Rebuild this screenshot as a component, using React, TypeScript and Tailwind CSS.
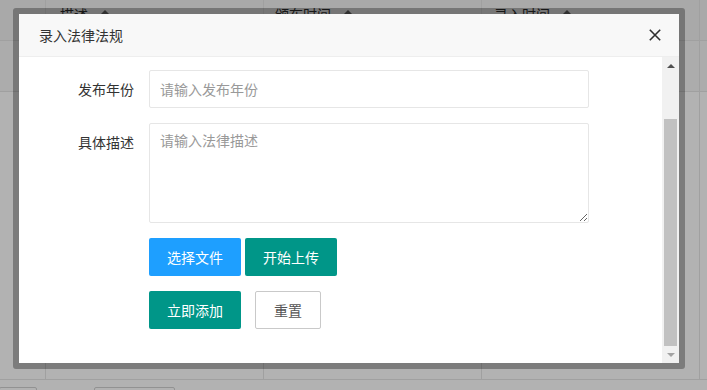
import React from "react";

function HeadCell({ w, pl, label, last }: { w: string; pl: string; label?: string; last?: boolean }) {
  return (
    <div className={`${w} ${last ? "" : "border-r"} border-[#e6e6e6] ${pl} pt-[4px] flex items-start`}>
      {label ? (
        <>
          <span className="text-[14px] leading-[20px] text-[#333]">{label}</span>
          <span className="ml-[12px] mt-[6px] w-0 h-0 border-l-[5px] border-r-[5px] border-b-[5px] border-l-transparent border-r-transparent border-b-[#666]" />
        </>
      ) : null}
    </div>
  );
}

function Row({ h, bg, children }: { h: string; bg: string; children?: React.ReactNode }) {
  return <div className={`flex ${h} ${bg} border-b border-[#e6e6e6]`}>{children}</div>;
}

function EmptyCells() {
  return (
    <>
      <div className="w-[46px] border-r border-[#e6e6e6]" />
      <div className="w-[218px] border-r border-[#e6e6e6]" />
      <div className="w-[218px] border-r border-[#e6e6e6]" />
      <div className="w-[218px] border-r border-[#e6e6e6]" />
      <div className="flex-1" />
    </>
  );
}

export default function App() {
  return (
    <div className="relative w-[707px] h-[390px] overflow-hidden bg-white font-['Noto_Sans_CJK_SC','Noto_Sans',sans-serif] text-[#333]">
      {/* page behind */}
      <div className="flex flex-col">
        <Row h="h-[41px]" bg="bg-[#f2f2f2]">
          <div className="w-[46px] border-r border-[#e6e6e6]" />
          <HeadCell w="w-[218px]" pl="pl-[14px]" label="描述" />
          <HeadCell w="w-[218px]" pl="pl-[11px]" label="颁布时间" />
          <HeadCell w="w-[218px]" pl="pl-[12px]" label="录入时间" />
          <div className="flex-1" />
        </Row>
        <Row h="h-[51px]" bg="bg-[#f6f6f6]">
          <EmptyCells />
        </Row>
        <Row h="h-[288px]" bg="bg-white">
          <EmptyCells />
        </Row>
        <div className="flex mt-[7px]">
          <div className="w-[38px] h-[30px] border border-[#d2d2d2] rounded-[2px] -ml-[1px]" />
          <div className="w-[81px] h-[30px] border border-[#d2d2d2] rounded-[2px] ml-[57px]" />
        </div>
      </div>

      {/* shade */}
      <div className="absolute inset-0 bg-black/30" />

      {/* dialog */}
      <div className="absolute left-[13px] top-[8px] w-[672px] h-[361px] border-[6px] border-black/30 rounded-[3px] flex flex-col">
        <div className="flex-1 bg-white flex flex-col min-h-0">
          <div className="h-[43px] shrink-0 bg-[#f8f8f8] border-b border-[#eeeeee] flex items-center justify-between pl-[20px] pr-[18px]">
            <span className="text-[14px] leading-[20px] text-[#333]">录入法律法规</span>
            <svg width="12" height="12" viewBox="0 0 12 12" className="block">
              <path d="M0.8 0.8 L11.2 11.2 M11.2 0.8 L0.8 11.2" stroke="#2f2f2f" strokeWidth="1.6" fill="none" />
            </svg>
          </div>

          <div className="flex flex-1 min-h-0">
            <div className="flex-1 pl-[20px] pt-[13px]">
              <div className="flex">
                <label className="w-[110px] px-[15px] py-[9px] text-right text-[14px] leading-[20px] text-[#333]">发布年份</label>
                <input
                  placeholder="请输入发布年份"
                  className="w-[440px] h-[38px] border border-[#e6e6e6] rounded-[2px] px-[10px] text-[14px] leading-[20px] outline-none placeholder:text-[#999] bg-white"
                />
              </div>
              <div className="flex mt-[15px]">
                <label className="w-[110px] px-[15px] py-[9px] text-right text-[14px] leading-[20px] text-[#333]">具体描述</label>
                <textarea
                  placeholder="请输入法律描述"
                  className="w-[440px] h-[100px] border border-[#e6e6e6] rounded-[2px] px-[10px] py-[6px] text-[14px] leading-[20px] outline-none placeholder:text-[#999] bg-white block"
                />
              </div>
              <div className="flex mt-[15px] pl-[110px] gap-[4px]">
                <button className="h-[38px] px-[18px] bg-[#1E9FFF] text-white text-[14px] leading-[38px] rounded-[2px]">选择文件</button>
                <button className="h-[38px] px-[18px] bg-[#009688] text-white text-[14px] leading-[38px] rounded-[2px]">开始上传</button>
              </div>
              <div className="flex mt-[15px] pl-[110px] gap-[14px]">
                <button className="h-[38px] px-[18px] bg-[#009688] text-white text-[14px] leading-[38px] rounded-[2px]">立即添加</button>
                <button className="h-[38px] px-[18px] bg-white border border-[#C9C9C9] text-[#555] text-[14px] leading-[36px] rounded-[2px]">重置</button>
              </div>
            </div>

            {/* scrollbar */}
            <div className="w-[17px] bg-[#f1f1f1] flex flex-col shrink-0">
              <div className="h-[17px] flex items-center justify-center">
                <div className="w-0 h-0 border-l-[4px] border-r-[4px] border-b-[4px] border-l-transparent border-r-transparent border-b-[#505050]" />
              </div>
              <div className="flex-1 flex flex-col justify-end px-[2px]">
                <div className="h-[227px] bg-[#c1c1c1]" />
              </div>
              <div className="h-[17px] flex items-center justify-center">
                <div className="w-0 h-0 border-l-[4px] border-r-[4px] border-t-[4px] border-l-transparent border-r-transparent border-t-[#a3a3a3]" />
              </div>
            </div>
          </div>
        </div>
      </div>
    </div>
  );
}
